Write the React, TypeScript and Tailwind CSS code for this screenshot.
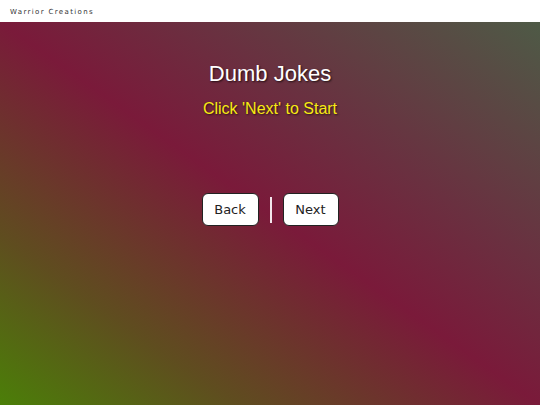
const App = () => {
 return (
  <div className="w-[540px] h-[405px] flex flex-col overflow-hidden">
   <div className="h-[22px] bg-white flex items-center px-[10px] pt-[2px] shrink-0">
    <p className="text-[7px] tracking-[1.35px] text-[#333] font-['DejaVu_Sans',sans-serif]">Warrior Creations</p>
   </div>
   <div className="flex-1 flex flex-col items-center bg-[linear-gradient(to_top_right,#4b7f08_0%,#5f4d1f_22%,#7a1a3a_50%,#6a3040_68%,#4e5a46_100%)] font-['Liberation_Sans',Arial,sans-serif]">
    <h1 className="mt-[38px] text-[22px] leading-[28px] text-white [text-shadow:1px_1px_2px_rgba(0,0,0,0.7)]">Dumb Jokes</h1>
    <p className="mt-[11px] text-[16px] leading-[20px] text-[#f7ea12] [text-shadow:1px_1px_2px_rgba(0,0,0,0.6)]">Click 'Next' to Start</p>
    <div className="mt-[74px] flex items-center gap-[11px]">
     <button className="w-[57px] h-[33px] bg-white border border-[#222] rounded-[6px] text-[13px] text-[#222] font-['DejaVu_Sans',sans-serif]">Back</button>
     <div className="w-[2px] h-[26px] bg-[#f3e6ec]"></div>
     <button className="w-[56px] h-[33px] bg-white border border-[#222] rounded-[6px] text-[13px] text-[#222] font-['DejaVu_Sans',sans-serif]">Next</button>
    </div>
   </div>
  </div>
 );
};

export default App;
